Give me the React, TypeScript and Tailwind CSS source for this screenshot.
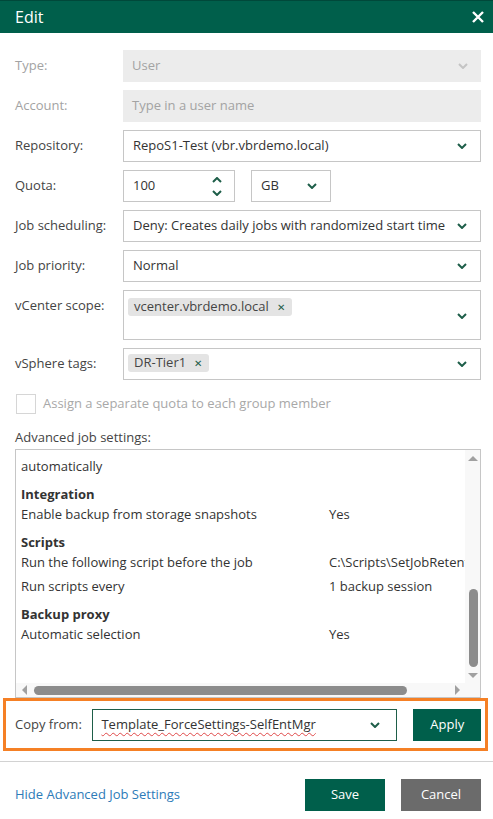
import React from "react";

const font = "font-['Open_Sans',sans-serif]";

function Chevron({ className = "" }: { className?: string }) {
  return (
    <svg viewBox="0 0 10 6" className={`w-[10px] h-[6px] ${className}`}>
      <path d="M1 1l4 4 4-4" fill="none" stroke="currentColor" strokeWidth="2" />
    </svg>
  );
}

function Label({ children, muted }: { children: React.ReactNode; muted?: boolean }) {
  return (
    <div className={`w-[108px] shrink-0 text-[13px] ${muted ? "text-[#a3a3a3]" : "text-[#444]"}`}>
      {children}
    </div>
  );
}

function Select({ value, disabled }: { value: string; disabled?: boolean }) {
  return (
    <div
      className={`flex-1 h-8 flex items-center pl-[9px] pr-[13px] text-[13px] ${
        disabled ? "bg-[#ececec] text-[#a3a3a3]" : "border border-[#c6c6c6] text-[#333]"
      }`}
    >
      <span className="flex-1 whitespace-nowrap overflow-hidden">{value}</span>
      <Chevron className={`ml-3 ${disabled ? "text-[#c4c4c4]" : "text-[#1e5e49]"}`} />
    </div>
  );
}

function Chip({ text }: { text: string }) {
  return (
    <span className="inline-flex items-center h-[18px] bg-[#e4e4e4] rounded-[3px] pl-[6px] pr-[7px] text-[13px] text-[#444]">
      {text}
      <span className="ml-[8px] text-[10px] text-[#1e5e49] leading-none">✕</span>
    </span>
  );
}

function Row({ label, value }: { label: string; value: string }) {
  return (
    <div className="flex h-5 items-center whitespace-nowrap">
      <span className="w-[308px] shrink-0">{label}</span>
      <span>{value}</span>
    </div>
  );
}

function Section({ title, children }: { title: string; children: React.ReactNode }) {
  return (
    <div className="mt-2 flex flex-col gap-1">
      <div className="h-5 -mb-1 flex items-center font-bold">{title}</div>
      {children}
    </div>
  );
}

export default function App() {
  return (
    <div className={`w-[493px] h-[819px] bg-white flex flex-col ${font}`}>
      {/* Header */}
      <div className="h-[33px] shrink-0 bg-[#005f4b] border-t border-[#00483a] flex items-center justify-between pl-[15px] pr-[9px]">
        <span className="text-white text-[16px]">Edit</span>
        <svg viewBox="0 0 12 12" className="w-[12px] h-[12px]">
          <path d="M1 1l10 10M11 1L1 11" stroke="white" strokeWidth="2.4" />
        </svg>
      </div>

      {/* Form */}
      <div className="pt-[17px] pl-[15px] pr-3 flex flex-col gap-2">
        <div className="flex items-center">
          <Label muted>Type:</Label>
          <Select value="User" disabled />
        </div>
        <div className="flex items-center">
          <Label muted>Account:</Label>
          <div className="flex-1 h-8 bg-[#ececec] flex items-center pl-[9px] text-[13px] text-[#a3a3a3]">
            Type in a user name
          </div>
        </div>
        <div className="flex items-center">
          <Label>Repository:</Label>
          <Select value="RepoS1-Test (vbr.vbrdemo.local)" />
        </div>
        <div className="flex items-center">
          <Label>Quota:</Label>
          <div className="w-[112px] h-8 border border-[#c6c6c6] flex items-center pl-[9px] pr-[12px] text-[13px] text-[#333]">
            <span className="flex-1">100</span>
            <div className="flex flex-col gap-[7px] text-[#1e5e49]">
              <Chevron className="rotate-180" />
              <Chevron />
            </div>
          </div>
          <div className="ml-4 w-20 h-8 border border-[#c6c6c6] flex items-center pl-[9px] pr-[13px] text-[13px] text-[#333]">
            <span className="flex-1">GB</span>
            <Chevron className="text-[#1e5e49]" />
          </div>
        </div>
        <div className="flex items-center">
          <Label>Job scheduling:</Label>
          <Select value="Deny: Creates daily jobs with randomized start time" />
        </div>
        <div className="flex items-center">
          <Label>Job priority:</Label>
          <Select value="Normal" />
        </div>
        <div className="flex items-start">
          <div className="pt-[6px]">
            <Label>vCenter scope:</Label>
          </div>
          <div className="flex-1 h-[50px] border border-[#c6c6c6] flex pl-1 pr-[13px] pt-[2px]">
            <div className="flex-1">
              <Chip text="vcenter.vbrdemo.local" />
            </div>
            <Chevron className="self-center text-[#1e5e49]" />
          </div>
        </div>
        <div className="flex items-center">
          <Label>vSphere tags:</Label>
          <div className="flex-1 h-8 border border-[#c6c6c6] flex items-center pl-1 pr-[13px]">
            <div className="flex-1 -mt-[6px]">
              <Chip text="DR-Tier1" />
            </div>
            <Chevron className="text-[#1e5e49]" />
          </div>
        </div>
        <div className="flex items-center mt-[6px] pl-px">
          <div className="w-5 h-5 border border-[#d6d6d6]" />
          <span className="ml-[7px] text-[13px] text-[#a8a8a8]">Assign a separate quota to each group member</span>
        </div>
        <div className="mt-[6px] text-[13px] text-[#444] leading-[18px]">Advanced job settings:</div>
      </div>

      {/* Advanced settings box */}
      <div className="ml-[15px] mr-3 mt-[3px] h-[249px] shrink-0 border border-[#c6c6c6] flex flex-col text-[13px] text-[#333]">
        <div className="flex-1 flex min-h-0">
          <div className="flex-1 overflow-hidden pl-[5px] pt-[7px]">
            <Row label="automatically" value="" />
            <Section title="Integration">
              <Row label="Enable backup from storage snapshots" value="Yes" />
            </Section>
            <Section title="Scripts">
              <Row label="Run the following script before the job" value="C:\Scripts\SetJobRetention.ps1" />
              <Row label="Run scripts every" value="1 backup session" />
            </Section>
            <Section title="Backup proxy">
              <Row label="Automatic selection" value="Yes" />
            </Section>
          </div>
          <div className="w-[15px] bg-[#f8f8f8] flex flex-col items-center pt-[6px] pb-[5px]">
            <span className="w-0 h-0 border-x-[5px] border-x-transparent border-b-[5px] border-b-[#a0a0a0]" />
            <div className="flex-1" />
            <div className="w-[9px] h-[78px] rounded-full bg-[#8c8c8c] ml-px" />
            <div className="h-[6px]" />
            <span className="w-0 h-0 border-x-[5px] border-x-transparent border-t-[5px] border-t-[#a0a0a0] ml-px" />
          </div>
        </div>
        <div className="h-[14px] flex items-center pl-[6px] pr-[20px] bg-[#f8f8f8]">
          <span className="w-0 h-0 border-y-[5px] border-y-transparent border-r-[5px] border-r-[#a0a0a0]" />
          <div className="ml-[7px] w-[373px] h-[9px] rounded-full bg-[#8c8c8c]" />
          <div className="flex-1" />
          <span className="w-0 h-0 border-y-[5px] border-y-transparent border-l-[5px] border-l-[#a0a0a0]" />
        </div>
      </div>

      {/* Copy from */}
      <div className="ml-[3px] mr-[5px] h-[53px] shrink-0 border-[3px] border-[#f58025] flex items-center pl-[9px] pr-[4px]">
        <span className="text-[13px] text-[#444] w-[78px]">Copy from:</span>
        <div className="w-[307px] h-8 border border-[#1e5e49] flex items-center pl-2 pr-[16px] text-[13px] text-[#333]">
          <span className="flex-1 underline decoration-wavy decoration-[#e04848] decoration-1 underline-offset-[3px]">
            Template_ForceSettings-SelfEntMgr
          </span>
          <Chevron className="text-[#1e5e49]" />
        </div>
        <div className="ml-4 w-[68px] h-8 bg-[#005f4b] text-white text-[13px] flex items-center justify-center">
          Apply
        </div>
      </div>

      {/* Footer */}
      <div className="mt-[10px] border-t border-[#d2d2d2] flex items-center pl-[15px] pr-3 pt-[17px]">
        <span className="flex-1 text-[13px] text-[#2d7bb8]">Hide Advanced Job Settings</span>
        <div className="w-20 h-8 bg-[#005f4b] text-white text-[13px] flex items-center justify-center">Save</div>
        <div className="ml-4 w-20 h-8 bg-[#6b6b6b] text-white text-[13px] flex items-center justify-center">Cancel</div>
      </div>
    </div>
  );
}
